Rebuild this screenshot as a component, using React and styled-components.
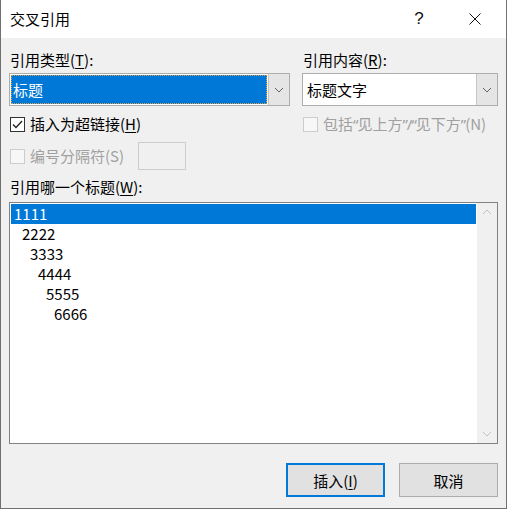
import React from "react";
import styled, { createGlobalStyle } from "styled-components";

const GlobalStyle = createGlobalStyle`
  html, body {
    margin: 0;
    padding: 0;
    background: #ffffff;
  }
  * {
    box-sizing: border-box;
  }
`;

const Window = styled.div`
  width: 507px;
  height: 509px;
  display: flex;
  flex-direction: column;
  background: #f0f0f0;
  border-left: 1px solid #707070;
  border-right: 1px solid #707070;
  border-bottom: 1px solid #707070;
  font-family: "Noto Sans CJK SC", "Noto Sans", sans-serif;
  font-size: 15px;
  color: #000;
`;

const TitleBar = styled.div`
  height: 38px;
  flex: none;
  background: #ffffff;
  display: flex;
  align-items: center;
  padding-left: 9px;
  padding-right: 4px;
`;

const Title = styled.div`
  flex: 1;
  line-height: 20px;
`;

const TitleButton = styled.div`
  width: ${(p) => p.$w || 58}px;
  height: 38px;
  display: flex;
  align-items: center;
  justify-content: center;
  font-family: "Liberation Sans", sans-serif;
  font-size: 17px;
  color: #111;
`;

const Body = styled.div`
  flex: 1;
  display: flex;
  flex-direction: column;
  padding: 12px 8px 0 8px;
`;

const Columns = styled.div`
  display: flex;
  gap: 12px;
`;

const Column = styled.div`
  width: ${(p) => p.$w}px;
  display: flex;
  flex-direction: column;
`;

const Label = styled.div`
  line-height: 20px;
  height: 20px;
  padding-left: 1px;
  margin-top: ${(p) => p.$mt || 0}px;
  color: #000;
  u {
    text-decoration: underline;
    text-underline-offset: 2px;
  }
`;

const Combo = styled.div`
  margin-top: 3px;
  height: 33px;
  display: flex;
  background: #ffffff;
  border: 1px solid #adadad;
`;

const ComboValue = styled.div`
  flex: 1;
  display: flex;
  align-items: center;
  padding: 1px;
`;

const ComboText = styled.div`
  flex: 1;
  height: 100%;
  display: flex;
  align-items: center;
  padding-left: 2px;
  line-height: 20px;
  ${(p) =>
    p.$selected
      ? `
    background: #0078d7;
    color: #ffffff;
    outline: 1px dotted #d9a04e;
    outline-offset: -1px;
  `
      : `
    padding-left: 3px;
  `}
`;

const ComboButton = styled.div`
  width: 21px;
  flex: none;
  background: #e5e5e5;
  border-left: 1px solid #c4c4c4;
  display: flex;
  align-items: center;
  justify-content: center;
`;

const CheckRow = styled.div`
  display: flex;
  align-items: center;
  gap: 5px;
  height: ${(p) => p.$h || 20}px;
  margin-top: ${(p) => p.$mt || 0}px;
  padding-left: 1px;
  color: ${(p) => (p.$disabled ? "#a0a0a0" : "#000")};
  line-height: 20px;
  white-space: nowrap;
  u {
    text-decoration: underline;
    text-underline-offset: 2px;
  }
`;

const Quote = styled.span`
  font-family: "Noto Sans", sans-serif;
  letter-spacing: -1px;
`;

const Box = styled.div`
  width: 15px;
  height: 15px;
  flex: none;
  background: ${(p) => (p.$disabled ? "#f7f7f7" : "#ffffff")};
  border: 1px solid ${(p) => (p.$disabled ? "#cccccc" : "#333333")};
  display: flex;
  align-items: center;
  justify-content: center;
`;

const SeparatorInput = styled.div`
  width: 48px;
  height: 28px;
  margin-left: 9px;
  background: #f0f0f0;
  border: 1px solid #cccccc;
`;

const ListBox = styled.div`
  margin-top: 5px;
  height: 242px;
  display: flex;
  background: #ffffff;
  border: 1px solid #828282;
`;

const ListItems = styled.div`
  flex: 1;
  padding: 1px 1px 0 1px;
`;

const ListItem = styled.div`
  height: 20px;
  line-height: 20px;
  padding-left: ${(p) => 3 + p.$level * 8}px;
  background: ${(p) => (p.$selected ? "#0078d7" : "transparent")};
  color: ${(p) => (p.$selected ? "#ffffff" : "#000")};
`;

const ScrollBar = styled.div`
  width: 20px;
  flex: none;
  background: #f0f0f0;
  display: flex;
  flex-direction: column;
  justify-content: space-between;
  align-items: center;
  padding: 6px 0;
`;

const ButtonRow = styled.div`
  margin-top: 19px;
  display: flex;
  justify-content: flex-end;
  gap: 14px;
`;

const Button = styled.div`
  width: 99px;
  height: 34px;
  display: flex;
  align-items: center;
  justify-content: center;
  background: #e1e1e1;
  border: ${(p) => (p.$default ? "2px solid #0078d7" : "1px solid #adadad")};
  u {
    text-decoration: underline;
    text-underline-offset: 2px;
  }
`;

const Chevron = ({ up, color = "#606060" }) => (
  <svg width="10" height="6" viewBox="0 0 10 6">
    <path
      d={up ? "M1 5 L5 1 L9 5" : "M1 1 L5 5 L9 1"}
      fill="none"
      stroke={color}
      strokeWidth="1"
    />
  </svg>
);

const CheckMark = () => (
  <svg width="11" height="9" viewBox="0 0 11 9">
    <path d="M1 4.5 L4 7.5 L10 1" fill="none" stroke="#222" strokeWidth="1.3" />
  </svg>
);

const CloseIcon = () => (
  <svg width="12" height="12" viewBox="0 0 12 12">
    <path d="M0.5 0.5 L11.5 11.5 M11.5 0.5 L0.5 11.5" stroke="#111" strokeWidth="1" />
  </svg>
);

const headings = ["1111", "2222", "3333", "4444", "5555", "6666"];

export default function App() {
  return (
    <>
      <GlobalStyle />
      <Window>
        <TitleBar>
          <Title>交叉引用</Title>
          <TitleButton>?</TitleButton>
          <TitleButton $w={54}>
            <CloseIcon />
          </TitleButton>
        </TitleBar>
        <Body>
          <Columns>
            <Column $w={281}>
              <Label>
                引用类型(<u>T</u>):
              </Label>
              <Combo>
                <ComboValue>
                  <ComboText $selected>标题</ComboText>
                </ComboValue>
                <ComboButton>
                  <Chevron />
                </ComboButton>
              </Combo>
              <CheckRow $mt={8}>
                <Box>
                  <CheckMark />
                </Box>
                <span>
                  插入为超链接(<u>H</u>)
                </span>
              </CheckRow>
              <CheckRow $mt={8} $h={28} $disabled>
                <Box $disabled />
                <span>编号分隔符(S)</span>
                <SeparatorInput />
              </CheckRow>
            </Column>
            <Column $w={196}>
              <Label>
                引用内容(<u>R</u>):
              </Label>
              <Combo>
                <ComboValue>
                  <ComboText>标题文字</ComboText>
                </ComboValue>
                <ComboButton>
                  <Chevron />
                </ComboButton>
              </Combo>
              <CheckRow $mt={8} $disabled>
                <Box $disabled />
                <span>
                  包括<Quote>“</Quote>见上方<Quote>”/“</Quote>见下方<Quote>”</Quote>(N)
                </span>
              </CheckRow>
            </Column>
          </Columns>
          <Label $mt={7}>
            引用哪一个标题(<u>W</u>):
          </Label>
          <ListBox>
            <ListItems>
              {headings.map((h, i) => (
                <ListItem key={h} $level={i} $selected={i === 0}>
                  {h}
                </ListItem>
              ))}
            </ListItems>
            <ScrollBar>
              <Chevron up color="#c2c2c2" />
              <Chevron color="#c2c2c2" />
            </ScrollBar>
          </ListBox>
          <ButtonRow>
            <Button $default>
              <span>
                插入(<u>I</u>)
              </span>
            </Button>
            <Button>取消</Button>
          </ButtonRow>
        </Body>
      </Window>
    </>
  );
}
